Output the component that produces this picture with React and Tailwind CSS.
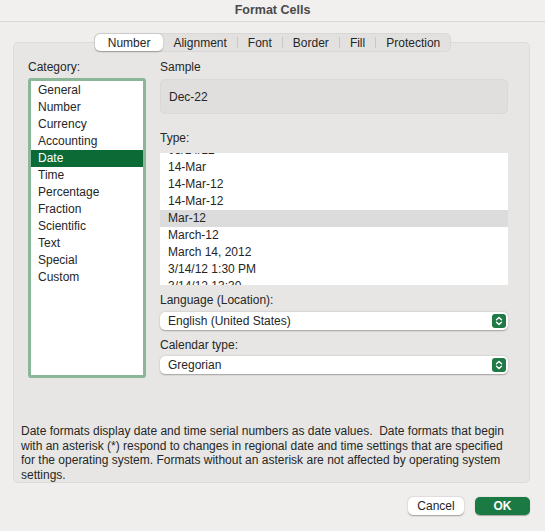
import { useState } from 'react';

const categories = ['General', 'Number', 'Currency', 'Accounting', 'Date', 'Time', 'Percentage', 'Fraction', 'Scientific', 'Text', 'Special', 'Custom'];
const types = ['03/14/12', '14-Mar', '14-Mar-12', '14-Mar-12', 'Mar-12', 'March-12', 'March 14, 2012', '3/14/12 1:30 PM', '3/14/12 13:30'];
const tabs = ['Number', 'Alignment', 'Font', 'Border', 'Fill', 'Protection'];

function Stepper() {
  return (
    <span className="flex h-[14px] w-[14px] items-center justify-center rounded-[3px] bg-[#1f7a46]">
      <svg width="8" height="10" viewBox="0 0 8 10" fill="none" stroke="white" strokeWidth="1.4" strokeLinecap="round" strokeLinejoin="round">
        <path d="M1.5 3.8 L4 1.5 L6.5 3.8" />
        <path d="M1.5 6.2 L4 8.5 L6.5 6.2" />
      </svg>
    </span>
  );
}

function Select({ value }) {
  return (
    <div className="flex h-[18px] items-center justify-between rounded-[5px] bg-white pl-[8px] pr-[2px] shadow-[0_0.5px_1.5px_rgba(0,0,0,0.3)]">
      <span>{value}</span>
      <Stepper />
    </div>
  );
}

export default function App() {
  const [tab, setTab] = useState('Number');
  const [category, setCategory] = useState('Date');
  const [type, setType] = useState('Mar-12');

  return (
    <div className="h-[531px] w-[545px] bg-[#efeeec] text-[12px] text-[#262626]" style={{ fontFamily: '"Liberation Sans", Arial, sans-serif' }}>
      <div className="flex h-[22px] items-center justify-center border-b border-[#d9d8d6] bg-[#f1f0ee] text-[12.5px] font-bold text-[#4a4a4a]">
        Format Cells
      </div>

      <div className="relative z-10 mt-[11px] flex justify-center">
        <div className="flex h-[19px] items-center rounded-[6px] bg-[#e2e1df] p-[1px] shadow-[inset_0_0_0_0.5px_rgba(0,0,0,0.08)]">
          {tabs.map((t, i) => (
            <div key={t} className="flex items-center">
              {i > 0 && tabs[i - 1] !== tab && t !== tab && <span className="h-[11px] w-px bg-[#c9c8c6]" />}
              <button
                type="button"
                onClick={() => setTab(t)}
                className={t === tab ? 'h-[17px] rounded-[5px] bg-white px-[13px] shadow-[0_0.5px_1.5px_rgba(0,0,0,0.3)]' : 'h-[17px] px-[10px]'}
              >
                {t}
              </button>
            </div>
          ))}
        </div>
      </div>

      <div className="mx-[13px] mt-[-10px] w-[517px] rounded-[5px] border border-[#dcdbd9] bg-[#e7e6e4] pl-[14px] pt-[17px]">
        <div className="flex gap-[14px]">
          <div className="w-[118px]">
            <p className="leading-[15px]">Category:</p>
            <div className="mt-[3px] h-[300px] overflow-hidden rounded-[3px] border-[3px] border-[#8cb698] bg-white pt-[1px]">
              {categories.map((c) => (
                <div
                  key={c}
                  onClick={() => setCategory(c)}
                  className={c === category ? 'h-[17px] bg-[#0b6a35] pl-[7px] leading-[17px] text-white' : 'h-[17px] pl-[7px] leading-[17px]'}
                >
                  {c}
                </div>
              ))}
            </div>
          </div>

          <div className="w-[348px]">
            <p className="leading-[15px]">Sample</p>
            <div className="mt-[4px] flex h-[35px] items-center rounded-[5px] border border-[#dad9d7] bg-[#e0dfdd] pl-[8px]">Dec-22</div>

            <p className="mt-[17px] leading-[15px]">Type:</p>
            <div className="mt-[7px] h-[132px] overflow-hidden bg-white">
              <div className="mt-[-11px]">
                {types.map((t, i) => (
                  <div
                    key={i}
                    onClick={() => setType(t)}
                    className={t === type ? 'h-[17px] bg-[#dcdcdc] pl-[8px] leading-[17px]' : 'h-[17px] pl-[8px] leading-[17px]'}
                  >
                    {t}
                  </div>
                ))}
              </div>
            </div>

            <p className="mt-[8px] leading-[15px]">Language (Location):</p>
            <div className="mt-[4px]">
              <Select value="English (United States)" />
            </div>

            <p className="mt-[8px] leading-[15px]">Calendar type:</p>
            <div className="mt-[3px]">
              <Select value="Gregorian" />
            </div>
          </div>
        </div>

        <p className="-ml-[7px] mt-[46px] leading-[14.5px]">
          Date formats display date and time serial numbers as date values.&nbsp; Date formats that begin
          <br />
          with an asterisk (*) respond to changes in regional date and time settings that are specified
          <br />
          for the operating system. Formats without an asterisk are not affected by operating system
          <br />
          settings.
        </p>
      </div>

      <div className="mr-[15px] mt-[14px] flex justify-end gap-[11px]">
        <button type="button" className="h-[18px] w-[56px] rounded-[5px] bg-white shadow-[0_0.5px_1.5px_rgba(0,0,0,0.35)]">Cancel</button>
        <button type="button" className="h-[18px] w-[55px] rounded-[5px] bg-[#1b7a44] font-bold text-white shadow-[0_0.5px_1px_rgba(0,0,0,0.3)]">OK</button>
      </div>
    </div>
  );
}
